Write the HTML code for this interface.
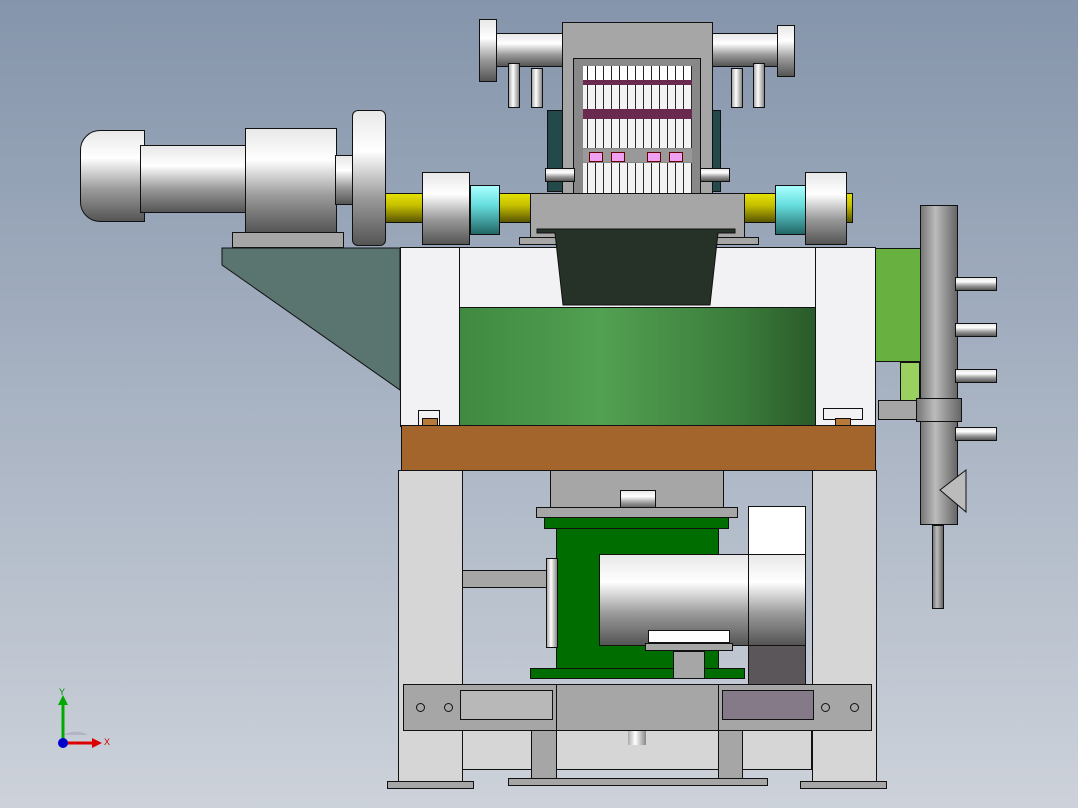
<!DOCTYPE html><html><head><style>
body{margin:0;width:1078px;height:808px;overflow:hidden;background:linear-gradient(#8595ab,#a8b3c3 50%,#cdd2da);position:relative;font-family:"Liberation Sans",sans-serif}
div{position:absolute;box-sizing:border-box}
.b{border:1px solid #111}
.m{background:linear-gradient(#e8e8e8,#fff 30%,#9a9a9a 65%,#555 100%)}
.mv{background:linear-gradient(90deg,#aaa,#fff 40%,#888)}
.mp{background:linear-gradient(90deg,#777,#bbb 40%,#666)}
.g{background:#a6a6a6}
.lt{background:#d6d6d6}
.w{background:#f2f2f4}
.y{background:linear-gradient(#e4e000,#c6c000 40%,#5a5600)}
.c{background:linear-gradient(#aaffff,#66dddd 40%,#226666)}
.scr{background:repeating-linear-gradient(90deg,#fff 0 4px,#222 4px 5px,#fff 5px 8px)}
.pk{background:#f0a0f0;border:1px solid #600}
</style></head><body>
<!-- top pipes -->
<div class="b m" style="left:495px;top:33px;width:70px;height:34px"></div>
<div class="b m" style="left:479px;top:19px;width:18px;height:63px"></div>
<div class="b m" style="left:710px;top:33px;width:68px;height:34px"></div>
<div class="b m" style="left:777px;top:25px;width:18px;height:52px"></div>
<div class="mv b" style="left:508px;top:63px;width:12px;height:45px"></div>
<div class="mv b" style="left:531px;top:68px;width:12px;height:40px"></div>
<div class="mv b" style="left:731px;top:68px;width:12px;height:40px"></div>
<div class="mv b" style="left:753px;top:63px;width:12px;height:45px"></div>
<div class="b" style="left:547px;top:110px;width:174px;height:82px;background:#23494a"></div>
<div class="b g" style="left:562px;top:22px;width:151px;height:210px"></div>
<div class="b" style="left:573px;top:58px;width:128px;height:175px;background:#888"></div>
<div class="scr" style="left:583px;top:66px;width:109px;height:14px"></div>
<div style="left:583px;top:80px;width:109px;height:5px;background:#6a2a50"></div>
<div class="scr" style="left:583px;top:85px;width:109px;height:24px;opacity:.9"></div>
<div style="left:583px;top:109px;width:109px;height:10px;background:#6a2a50"></div>
<div class="scr" style="left:583px;top:119px;width:109px;height:29px;opacity:.9"></div>
<div style="left:583px;top:149px;width:109px;height:13px;background:#999"></div>
<div class="scr" style="left:583px;top:163px;width:109px;height:34px;opacity:.9"></div>
<div style="left:583px;top:198px;width:109px;height:13px;background:#999"></div>
<div class="pk" style="left:589px;top:199px;width:14px;height:12px;background:#c04090"></div>
<div class="pk" style="left:611px;top:199px;width:14px;height:12px;background:#c04090"></div>
<div class="pk" style="left:647px;top:199px;width:14px;height:12px;background:#c04090"></div>
<div class="pk" style="left:669px;top:199px;width:14px;height:12px;background:#c04090"></div>
<div class="pk" style="left:589px;top:152px;width:14px;height:10px"></div>
<div class="pk" style="left:611px;top:152px;width:14px;height:10px"></div>
<div class="pk" style="left:647px;top:152px;width:14px;height:10px"></div>
<div class="pk" style="left:669px;top:152px;width:14px;height:10px"></div>
<div class="scr" style="left:583px;top:212px;width:109px;height:17px;opacity:.8"></div>
<div class="b m" style="left:545px;top:168px;width:30px;height:14px"></div>
<div class="b m" style="left:700px;top:168px;width:30px;height:14px"></div>
<!-- shafts -->
<div class="y b" style="left:380px;top:193px;width:160px;height:30px"></div>
<div class="y b" style="left:735px;top:193px;width:118px;height:30px"></div>
<div class="b g" style="left:530px;top:193px;width:215px;height:50px"></div>
<div class="b g" style="left:519px;top:237px;width:240px;height:8px"></div>
<div class="c b" style="left:470px;top:185px;width:30px;height:50px"></div>
<div class="c b" style="left:775px;top:185px;width:32px;height:50px"></div>
<div class="b m" style="left:422px;top:172px;width:48px;height:73px"></div>
<div class="b m" style="left:805px;top:172px;width:42px;height:73px"></div>
<!-- left motor -->
<div class="b m" style="left:80px;top:130px;width:65px;height:92px;border-radius:20px 0 0 20px"></div>
<div class="b m" style="left:140px;top:145px;width:106px;height:68px"></div>
<div class="b m" style="left:245px;top:128px;width:92px;height:105px"></div>
<div class="b m" style="left:335px;top:155px;width:18px;height:50px"></div>
<div class="b m" style="left:352px;top:110px;width:34px;height:136px;border-radius:6px"></div>
<div class="b g" style="left:232px;top:232px;width:112px;height:16px"></div>
<svg style="position:absolute;left:0;top:0" width="1078" height="808"><polygon points="222,248 400,248 400,390 222,265" fill="#5a7470" stroke="#111"/></svg>
<!-- main frame -->
<div class="b w" style="left:400px;top:247px;width:476px;height:180px"></div>
<div class="b" style="left:400px;top:247px;width:60px;height:180px"></div>
<div class="b" style="left:815px;top:247px;width:61px;height:180px"></div>
<div class="b" style="left:459px;top:307px;width:357px;height:120px;background:linear-gradient(90deg,#3f8a40,#52a052 40%,#3a7a3a 80%,#2a5a2a)"></div>
<svg style="position:absolute;left:0;top:0" width="1078" height="808"><polygon points="537,229 735,229 735,233 718,233 710,305 563,305 555,233 537,233" fill="#263128" stroke="#111"/></svg>
<div class="b w" style="left:418px;top:410px;width:22px;height:30px"></div>
<div class="b" style="left:422px;top:418px;width:16px;height:22px;background:#b77a3a"></div>
<div class="b w" style="left:823px;top:408px;width:40px;height:12px"></div>
<div class="b" style="left:835px;top:418px;width:16px;height:22px;background:#b77a3a"></div>
<div class="b" style="left:401px;top:425px;width:475px;height:46px;background:#a4652c"></div>
<!-- right side -->
<div class="b" style="left:875px;top:248px;width:68px;height:114px;background:#68b040"></div>
<div class="b" style="left:900px;top:362px;width:20px;height:40px;background:#9ad060"></div>
<div class="b g" style="left:878px;top:400px;width:45px;height:20px"></div>
<div class="b mp" style="left:920px;top:205px;width:38px;height:320px"></div>
<div class="b mp" style="left:916px;top:398px;width:46px;height:24px"></div>
<div class="b mp" style="left:932px;top:525px;width:12px;height:84px"></div>
<div class="b m" style="left:955px;top:277px;width:42px;height:14px"></div>
<div class="b m" style="left:955px;top:323px;width:42px;height:14px"></div>
<div class="b m" style="left:955px;top:369px;width:42px;height:14px"></div>
<div class="b m" style="left:955px;top:427px;width:42px;height:14px"></div>
<svg style="position:absolute;left:0;top:0" width="1078" height="808"><polygon points="940,490 966,470 966,512" fill="#bbb" stroke="#111"/></svg>
<!-- lower -->
<div class="b lt" style="left:398px;top:470px;width:65px;height:312px"></div>
<div class="b lt" style="left:812px;top:470px;width:65px;height:312px"></div>
<div class="b lt" style="left:462px;top:730px;width:350px;height:40px"></div>
<div class="b g" style="left:462px;top:570px;width:90px;height:18px"></div>
<div class="b g" style="left:550px;top:470px;width:174px;height:40px"></div>
<div class="b m" style="left:620px;top:490px;width:36px;height:20px"></div>
<div class="b g" style="left:536px;top:507px;width:202px;height:11px"></div>
<div class="b" style="left:544px;top:517px;width:185px;height:12px;background:#006d00"></div>
<div class="b" style="left:556px;top:528px;width:163px;height:142px;background:#006d00"></div>
<div class="b mv" style="left:546px;top:558px;width:12px;height:90px"></div>
<div class="b" style="left:530px;top:668px;width:215px;height:11px;background:#006d00"></div>
<div class="b" style="left:748px;top:506px;width:58px;height:50px;background:#fff"></div>
<div class="b m" style="left:599px;top:554px;width:150px;height:92px"></div>
<div class="b m" style="left:748px;top:554px;width:58px;height:92px"></div>
<div class="b" style="left:748px;top:645px;width:58px;height:45px;background:#5a5659"></div>
<div class="b" style="left:648px;top:630px;width:82px;height:13px;background:#fff"></div>
<div class="b g" style="left:645px;top:643px;width:88px;height:8px"></div>
<div class="b g" style="left:673px;top:651px;width:32px;height:28px"></div>
<div class="b g" style="left:403px;top:684px;width:469px;height:47px"></div>
<div class="b" style="left:460px;top:690px;width:93px;height:30px;background:#b8b8b8"></div>
<div class="b" style="left:722px;top:690px;width:92px;height:30px;background:#857a87"></div>
<div class="b g" style="left:556px;top:684px;width:163px;height:47px"></div>
<div class="b g" style="left:531px;top:730px;width:26px;height:50px"></div>
<div class="b g" style="left:718px;top:730px;width:25px;height:50px"></div>
<div class="mv" style="left:628px;top:731px;width:18px;height:14px"></div>
<div class="b" style="left:416px;top:703px;width:9px;height:9px;border-radius:50%"></div>
<div class="b" style="left:444px;top:703px;width:9px;height:9px;border-radius:50%"></div>
<div class="b" style="left:821px;top:703px;width:9px;height:9px;border-radius:50%"></div>
<div class="b" style="left:850px;top:703px;width:9px;height:9px;border-radius:50%"></div>
<div class="b g" style="left:387px;top:781px;width:87px;height:8px"></div>
<div class="b g" style="left:508px;top:778px;width:260px;height:8px"></div>
<div class="b g" style="left:800px;top:781px;width:87px;height:8px"></div>
<!-- triad -->
<svg style="position:absolute;left:50px;top:685px" width="70" height="70"><path d="M13 50 A25 25 0 0 1 38 50 Z" fill="#aab" opacity=".7"/><line x1="13" y1="58" x2="13" y2="16" stroke="#0a0" stroke-width="3"/><polygon points="8,20 18,20 13,10" fill="#0a0"/><line x1="13" y1="58" x2="45" y2="58" stroke="#d00" stroke-width="3"/><polygon points="42,53 42,63 52,58" fill="#d00"/><circle cx="13" cy="58" r="5" fill="#00c"/><text x="9" y="10" font-size="9" fill="#080">Y</text><text x="54" y="60" font-size="9" fill="#c00">X</text></svg>
</body></html>
